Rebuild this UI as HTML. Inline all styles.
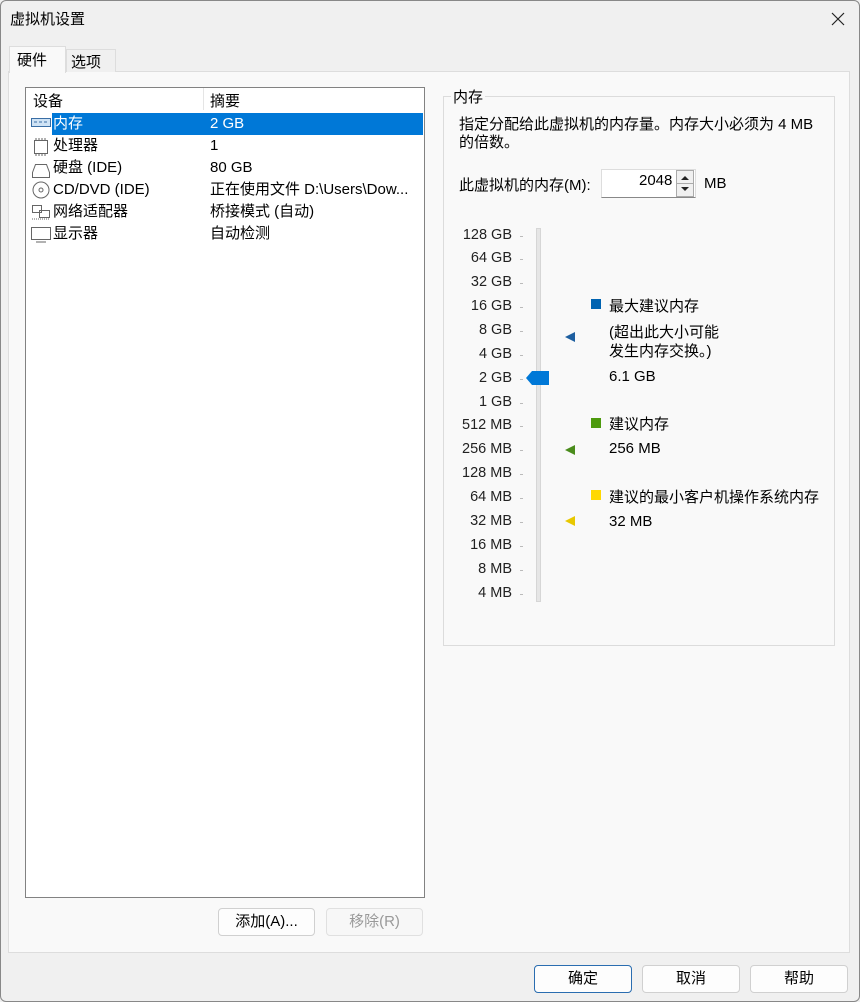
<!DOCTYPE html>
<html><head><meta charset="utf-8"><style>
*{margin:0;padding:0;box-sizing:border-box}
body{width:860px;height:1002px;background:#f0f0f0;font-family:"Liberation Sans","Noto Sans CJK SC",sans-serif;font-size:15px;color:#000;position:relative;overflow:hidden}
.a{position:absolute;white-space:nowrap}
.btn{position:absolute;height:28px;background:#fdfdfd;border:1px solid #d0d0d0;border-radius:4px;text-align:center;line-height:26px}
.lbl{position:absolute;right:348px;text-align:right;font-size:14.5px;color:#222}
.tk{position:absolute;left:520px;width:3px;height:1px;background:#bbb}
.row{position:absolute;left:26px;width:397px;height:22px;line-height:22px}
</style></head><body>
<div class="a" style="left:0;top:0;width:860px;height:1002px;border:1px solid #888;border-radius:6px;background:#f0f0f0"></div>
<div class="a" style="left:10px;top:8px">虚拟机设置</div>
<svg class="a" style="left:831px;top:12px" width="14" height="14"><path d="M1 1L13 13M13 1L1 13" stroke="#222" stroke-width="1.2"/></svg>
<div class="a" style="left:8px;top:71px;width:842px;height:882px;background:#f9f9f9;border:1px solid #ddd"></div>
<div class="a" style="left:66px;top:49px;width:50px;height:23px;background:#f0f0f0;border:1px solid #ddd;border-bottom:none"></div>
<div class="a" style="left:71px;top:51px">选项</div>
<div class="a" style="left:9px;top:46px;width:57px;height:27px;background:#f9f9f9;border:1px solid #ddd;border-bottom:none"></div>
<div class="a" style="left:17px;top:49px">硬件</div>
<div class="a" style="left:25px;top:87px;width:400px;height:811px;background:#fff;border:1px solid #828282"></div>
<div class="a" style="left:203px;top:88px;width:1px;height:22px;background:#e5e5e5"></div>
<div class="a" style="left:33px;top:90px">设备</div>
<div class="a" style="left:210px;top:90px">摘要</div>
<div class="a" style="left:52px;top:113px;width:371px;height:22px;background:#0078d7"></div>
<div class="row" style="top:113px;color:#fff"><span class="a" style="left:27px">内存</span><span class="a" style="left:184px">2 GB</span></div>
<div class="row" style="top:135px"><span class="a" style="left:27px">处理器</span><span class="a" style="left:184px">1</span></div>
<div class="row" style="top:157px"><span class="a" style="left:27px">硬盘 (IDE)</span><span class="a" style="left:184px">80 GB</span></div>
<div class="row" style="top:179px"><span class="a" style="left:27px">CD/DVD (IDE)</span><span class="a" style="left:184px">正在使用文件 D:\Users\Dow...</span></div>
<div class="row" style="top:201px"><span class="a" style="left:27px">网络适配器</span><span class="a" style="left:184px">桥接模式 (自动)</span></div>
<div class="row" style="top:223px"><span class="a" style="left:27px">显示器</span><span class="a" style="left:184px">自动检测</span></div>
<svg class="a" style="left:30px;top:114px" width="22" height="132" fill="none" stroke="#666">
<rect x="1.5" y="4.5" width="19" height="8" fill="#cfe3f5" stroke="#3a6ea5"/><path d="M4 8h3M9 8h3M14 8h3" stroke="#3a6ea5"/>
<rect x="4.5" y="26.5" width="13" height="13"/><path d="M6 24v2M9 24v2M12 24v2M15 24v2M6 40v2M9 40v2M12 40v2M15 40v2"/>
<path d="M2.5 58.5l3-8h11l3 8v5h-17z"/>
<circle cx="11" cy="76" r="8"/><circle cx="11" cy="76" r="2"/>
<rect x="2.5" y="91.5" width="9" height="7"/><rect x="9.5" y="96.5" width="10" height="7"/><path d="M2 105h18" stroke-dasharray="1 1"/>
<rect x="1.5" y="113.5" width="19" height="12"/><path d="M6 128h10"/>
</svg>
<div class="btn" style="left:218px;top:908px;width:97px">添加(A)...</div>
<div class="btn" style="left:326px;top:908px;width:97px;color:#999;background:#f7f7f7;border-color:#e0e0e0">移除(R)</div>
<div class="a" style="left:443px;top:96px;width:392px;height:550px;border:1px solid #dcdcdc"></div>
<div class="a" style="left:451px;top:86px;background:#f9f9f9;padding:0 2px">内存</div>
<div class="a" style="left:459px;top:113px">指定分配给此虚拟机的内存量。内存大小必须为 4 MB</div>
<div class="a" style="left:459px;top:131px">的倍数。</div>
<div class="a" style="left:459px;top:174px">此虚拟机的内存(M):</div>
<div class="a" style="left:601px;top:169px;width:95px;height:29px;background:#fff;border:1px solid #ddd;border-bottom:1px solid #888"></div>
<div class="a" style="left:639px;top:172px">2048</div>
<div class="a" style="left:676px;top:170px;width:18px;height:27px;border:1px solid #aaa;background:#f0f0f0"></div>
<svg class="a" style="left:676px;top:170px" width="18" height="27"><path d="M5 10l4-4 4 4z M5 17l4 4 4-4z" fill="#222"/><path d="M1 13.5h16" stroke="#aaa"/></svg>
<div class="a" style="left:704px;top:175px">MB</div>
<div class="lbl" style="top:227px">128 GB</div><div class="tk" style="top:236px"></div>
<div class="lbl" style="top:250px">64 GB</div><div class="tk" style="top:259px"></div>
<div class="lbl" style="top:274px">32 GB</div><div class="tk" style="top:283px"></div>
<div class="lbl" style="top:298px">16 GB</div><div class="tk" style="top:307px"></div>
<div class="lbl" style="top:322px">8 GB</div><div class="tk" style="top:331px"></div>
<div class="lbl" style="top:346px">4 GB</div><div class="tk" style="top:355px"></div>
<div class="lbl" style="top:370px">2 GB</div><div class="tk" style="top:379px"></div>
<div class="lbl" style="top:394px">1 GB</div><div class="tk" style="top:403px"></div>
<div class="lbl" style="top:417px">512 MB</div><div class="tk" style="top:426px"></div>
<div class="lbl" style="top:441px">256 MB</div><div class="tk" style="top:450px"></div>
<div class="lbl" style="top:465px">128 MB</div><div class="tk" style="top:474px"></div>
<div class="lbl" style="top:489px">64 MB</div><div class="tk" style="top:498px"></div>
<div class="lbl" style="top:513px">32 MB</div><div class="tk" style="top:522px"></div>
<div class="lbl" style="top:537px">16 MB</div><div class="tk" style="top:546px"></div>
<div class="lbl" style="top:561px">8 MB</div><div class="tk" style="top:570px"></div>
<div class="lbl" style="top:585px">4 MB</div><div class="tk" style="top:594px"></div>
<div class="a" style="left:536px;top:228px;width:5px;height:374px;background:#e6e6e6;border:1px solid #d6d6d6"></div>
<svg class="a" style="left:525px;top:370px" width="26" height="16"><path d="M1 8l6-7h17v14h-17z" fill="#0078d7"/></svg>
<svg class="a" style="left:564px;top:331px" width="12" height="12"><path d="M1 6l10-5v10z" fill="#1e5fa0"/></svg>
<svg class="a" style="left:564px;top:444px" width="12" height="12"><path d="M1 6l10-5v10z" fill="#4a8c1c"/></svg>
<svg class="a" style="left:564px;top:515px" width="12" height="12"><path d="M1 6l10-5v10z" fill="#e8c800"/></svg>
<div class="a" style="left:591px;top:299px;width:10px;height:10px;background:#0063b1"></div>
<div class="a" style="left:609px;top:295px">最大建议内存</div>
<div class="a" style="left:609px;top:321px">(超出此大小可能</div>
<div class="a" style="left:609px;top:340px">发生内存交换。)</div>
<div class="a" style="left:609px;top:368px">6.1 GB</div>
<div class="a" style="left:591px;top:418px;width:10px;height:10px;background:#4d9a0e"></div>
<div class="a" style="left:609px;top:413px">建议内存</div>
<div class="a" style="left:609px;top:440px">256 MB</div>
<div class="a" style="left:591px;top:490px;width:10px;height:10px;background:#ffd800"></div>
<div class="a" style="left:609px;top:486px">建议的最小客户机操作系统内存</div>
<div class="a" style="left:609px;top:513px">32 MB</div>
<div class="btn" style="left:534px;top:965px;width:98px;border-color:#2a6db0">确定</div>
<div class="btn" style="left:642px;top:965px;width:98px">取消</div>
<div class="btn" style="left:750px;top:965px;width:98px">帮助</div>
</body></html>
